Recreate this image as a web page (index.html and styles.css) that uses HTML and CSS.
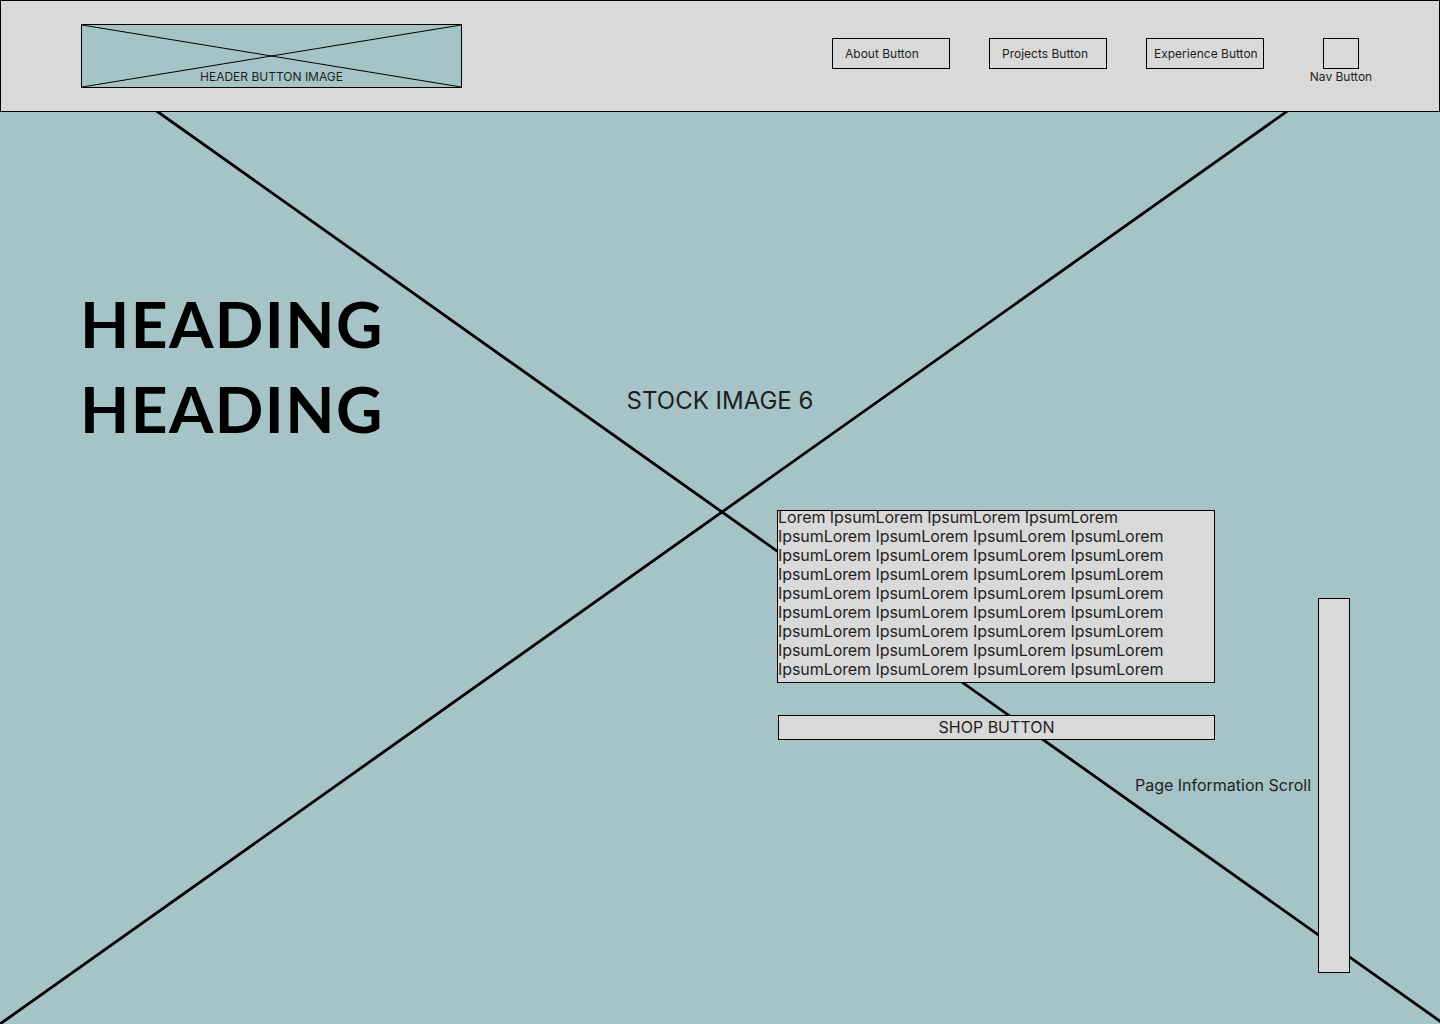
FILE: index.html
```html
<!DOCTYPE html>
<html lang="en">
	<head>
		<meta charset="UTF-8" />
		<meta name="viewport" content="width=device-width, initial-scale=1.0" />
		<title>Heading</title>
		<link rel="stylesheet" href="styles.css">
	</head>
	<body>
		<div class="page">
			<!-- placeholder for the full-bleed stock image -->
			<svg class="backdrop" width="1444" height="1024" viewBox="0 0 1444 1024">
				<line x1="0" y1="0" x2="1444" y2="1024" />
				<line x1="1444" y1="0" x2="0" y2="1024" />
			</svg>

			<header class="site-header">
				<a class="header-logo" href="#">
					<svg class="header-logo-cross" viewBox="0 0 100 100" preserveAspectRatio="none">
						<line x1="0" y1="0" x2="100" y2="100" />
						<line x1="100" y1="0" x2="0" y2="100" />
					</svg>
					<span class="header-logo-label">HEADER BUTTON IMAGE</span>
				</a>
				<nav class="site-nav">
					<button class="nav-link">About Button</button>
					<button class="nav-link">Projects Button</button>
					<button class="nav-link nav-link-wide">Experience Button</button>
					<div class="nav-toggle">
						<button class="nav-toggle-box"></button>
						<span class="nav-toggle-label">Nav Button</span>
					</div>
				</nav>
			</header>

			<main class="hero">
				<p class="hero-caption">STOCK IMAGE 6</p>
				<div class="hero-main">
					<h1 class="hero-heading">HEADING<br />HEADING</h1>
					<div class="hero-copy">
						<div class="copy-box">
							<p>Lorem IpsumLorem IpsumLorem IpsumLorem IpsumLorem IpsumLorem IpsumLorem IpsumLorem IpsumLorem IpsumLorem IpsumLorem IpsumLorem IpsumLorem IpsumLorem IpsumLorem IpsumLorem IpsumLorem IpsumLorem IpsumLorem IpsumLorem IpsumLorem IpsumLorem IpsumLorem IpsumLorem IpsumLorem IpsumLorem IpsumLorem IpsumLorem IpsumLorem IpsumLorem IpsumLorem IpsumLorem IpsumLorem IpsumLorem IpsumLorem IpsumLorem</p>
						</div>
						<button class="shop-button">SHOP BUTTON</button>
						<p class="scroll-label">Page Information Scroll</p>
					</div>
				</div>
				<div class="scroll-track"></div>
			</main>
		</div>
	</body>
</html>
```

FILE: styles.css
```css
body {
	margin: 0;
	font-family: Inter, "Noto Sans", sans-serif;
	color: #1e1e1e;
}
.page {
	position: relative;
	width: 1440px;
	height: 1024px;
	overflow: hidden;
	background-color: #a6c4c7;
}
.backdrop {
	position: absolute;
	top: 0;
	left: 0;
}
.backdrop line {
	stroke: #000;
	stroke-width: 2.8;
}

/* header */
.site-header {
	position: relative;
	display: flex;
	align-items: flex-start;
	height: 112px;
	box-sizing: border-box;
	padding: 23px 66px 0 80px;
	background-color: #d9d9d9;
	border: 1px solid #000;
}
.header-logo {
	position: relative;
	display: flex;
	align-items: flex-end;
	justify-content: center;
	width: 381px;
	height: 64px;
	box-sizing: border-box;
	padding-bottom: 3px;
	background-color: #a6c4c7;
	border: 1px solid #000;
	font-size: 12px;
	color: #1e1e1e;
	text-decoration: none;
}
.header-logo-cross {
	position: absolute;
	top: 0;
	left: 0;
	width: 100%;
	height: 100%;
}
.header-logo-cross line {
	stroke: #000;
	stroke-width: 1;
	vector-effect: non-scaling-stroke;
}
.header-logo-label {
	position: relative;
}
.site-nav {
	display: flex;
	align-items: flex-start;
	gap: 39px;
	margin-left: auto;
	margin-top: 14px;
}
.nav-link {
	width: 118px;
	height: 31px;
	padding: 0 0 0 12px;
	background: transparent;
	border: 1px solid #000;
	font-family: Inter, sans-serif;
	font-size: 12px;
	color: #1e1e1e;
	text-align: left;
	cursor: pointer;
}
.nav-link-wide {
	padding-left: 7px;
}
.nav-toggle {
	display: flex;
	flex-direction: column;
	align-items: center;
	width: 64px;
	margin-left: 6px;
}
.nav-toggle-box {
	width: 36px;
	height: 31px;
	padding: 0;
	background: transparent;
	border: 1px solid #000;
	cursor: pointer;
}
.nav-toggle-label {
	font-size: 12px;
	white-space: nowrap;
}

/* hero */
.hero {
	position: relative;
	display: flex;
	height: 912px;
	box-sizing: border-box;
	padding: 0 90px 0 80px;
}
.hero-caption {
	position: absolute;
	top: 274px;
	left: 0;
	width: 100%;
	margin: 0;
	font-size: 24px;
	text-align: center;
}
.hero-main {
	flex: 1;
	padding-top: 169px;
}
.hero-heading {
	margin: 0;
	font-family: Lato, sans-serif;
	font-size: 64px;
	font-weight: 700;
	line-height: 85px;
	letter-spacing: 1.4px;
	color: #000;
}
.hero-copy {
	margin-top: 59px;
	padding-left: 697px;
}
.copy-box {
	width: 438px;
	height: 173px;
	box-sizing: border-box;
	padding-right: 20px;
	background-color: #d9d9d9;
	border: 1px solid #000;
	font-size: 16px;
	line-height: 19px;
	letter-spacing: -0.07px;
}
.copy-box p {
	margin: -3px 0 0;
}
.shop-button {
	display: block;
	width: 437px;
	height: 25px;
	margin: 32px 0 0 1px;
	padding: 0 0 2px;
	background-color: #d9d9d9;
	border: 1px solid #000;
	font-family: Inter, sans-serif;
	font-size: 16px;
	color: #1e1e1e;
	cursor: pointer;
}
.scroll-label {
	margin: 36px 0 0;
	font-size: 16px;
	line-height: 19px;
	text-align: right;
}
.scroll-track {
	flex-shrink: 0;
	width: 32px;
	height: 375px;
	box-sizing: border-box;
	margin: 486px 0 0 7px;
	background-color: #d9d9d9;
	border: 1px solid #000;
}
```
